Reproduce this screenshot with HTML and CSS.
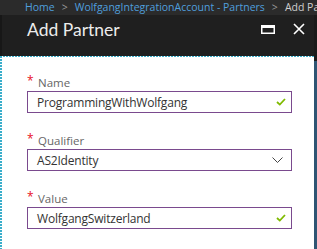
FILE: index.html
```html
<!DOCTYPE html>
<html>
<head>
<meta charset="utf-8">
<link rel="stylesheet" href="styles.css">
</head>
<body>
<div class="crumbs">
  <span class="link">Home</span>
  <span class="sep">&gt;</span>
  <span class="link">WolfgangIntegrationAccount - Partners</span>
  <span class="sep">&gt;</span>
  <span class="current">Add Partner</span>
</div>
<div class="stage">
  <div class="blade">
    <div class="blade-header">
      <h1 class="title">Add Partner</h1>
      <div class="actions">
        <svg class="icon-max" width="14" height="9" viewBox="0 0 14 9"><rect x="0.75" y="0.75" width="12.5" height="7.5" fill="none" stroke="#fff" stroke-width="1.5"/><rect x="0" y="0" width="14" height="3" fill="#fff"/></svg>
        <svg class="icon-close" width="12" height="12" viewBox="0 0 12 12"><path d="M1 1L11 11M11 1L1 11" stroke="#fff" stroke-width="1.6" fill="none"/></svg>
      </div>
    </div>
    <div class="blade-body">
      <div class="field">
        <div class="label"><span class="req">*</span>Name</div>
        <div class="box"><span class="value">ProgrammingWithWolfgang</span>
          <svg class="check" width="10" height="8" viewBox="0 0 10 8"><path d="M1 4L3.8 6.6L9 1" stroke="#7fba00" stroke-width="1.8" fill="none"/></svg>
        </div>
      </div>
      <div class="field">
        <div class="label"><span class="req">*</span>Qualifier</div>
        <div class="box select"><span class="value">AS2Identity</span>
          <svg class="chev" width="11" height="6" viewBox="0 0 11 6"><path d="M0.5 0.5L5.5 5.5L10.5 0.5" stroke="#444" stroke-width="1" fill="none"/></svg>
        </div>
      </div>
      <div class="field">
        <div class="label"><span class="req">*</span>Value</div>
        <div class="box"><span class="value">WolfgangSwitzerland</span>
          <svg class="check" width="10" height="8" viewBox="0 0 10 8"><path d="M1 4L3.8 6.6L9 1" stroke="#7fba00" stroke-width="1.8" fill="none"/></svg>
        </div>
      </div>
    </div>
  </div>
  <div class="side">
    <div class="side-top"></div>
    <div class="side-rest"></div>
  </div>
</div>
</body>
</html>
```
FILE: styles.css
```css
html, body {
  margin: 0;
  padding: 0;
  width: 317px;
  height: 249px;
  overflow: hidden;
  background: #1f1f1f;
  font-family: "Open Sans", "Noto Sans", sans-serif;
}
.crumbs {
  height: 15px;
  background: #2b2b2b;
  display: flex;
  align-items: center;
  padding-left: 25px;
  font-size: 10.5px;
  white-space: nowrap;
  overflow: hidden;
  line-height: 15px;
}
.crumbs .link { color: #4f9fdd; }
.crumbs .sep { color: #9a9a9a; margin: 0 7px; }
.crumbs .current { color: #cfcfcf; }
.stage {
  display: flex;
  height: 234px;
}
.blade {
  width: 314px;
  display: flex;
  flex-direction: column;
}
.blade-header {
  height: 33px;
  padding-bottom: 12px;
  background: #1f1f1f;
  border-left: 2px solid #171717;
  display: flex;
  align-items: center;
  padding-left: 25px;
  padding-right: 9px;
}
.title {
  margin: 0;
  font-family: "Lato", "Open Sans", sans-serif;
  font-weight: 400;
  font-size: 17.5px;
  color: #ececec;
  flex: 1;
}
.actions {
  display: flex;
  align-items: center;
  gap: 18px;
}
.icon-close { margin-top: -1px; }
.blade-body {
  flex: 1;
  padding: 19px 22px 0 27px;
  background:
    repeating-linear-gradient(90deg, #3aaecb 0 2px, transparent 2px 3px) top left / 100% 1px no-repeat,
    repeating-linear-gradient(180deg, #3aaecb 0 2px, transparent 2px 3px) top left / 2px 100% no-repeat,
    #fff;
}
.field { margin-bottom: 20px; }
.label {
  height: 16px;
  line-height: 16px;
  font-size: 11.5px;
  color: #666;
  display: flex;
  align-items: center;
}
.req {
  color: #e81123;
  width: 11px;
  font-size: 12px;
  position: relative;
  top: -2px;
}
.box {
  height: 20px;
  border: 1px solid #7a4a8e;
  display: flex;
  align-items: center;
  padding: 0 4px 0 9px;
}
.value {
  flex: 1;
  font-size: 12px;
  color: #333;
  letter-spacing: -0.2px;
}
.check { margin-right: 1px; }
.select .chev { margin-right: 4px; }
.side {
  width: 3px;
  display: flex;
  flex-direction: column;
}
.side-top { height: 46px; background: #1a1a1a; }
.side-rest { flex: 1; background: #2f5573; }
```
